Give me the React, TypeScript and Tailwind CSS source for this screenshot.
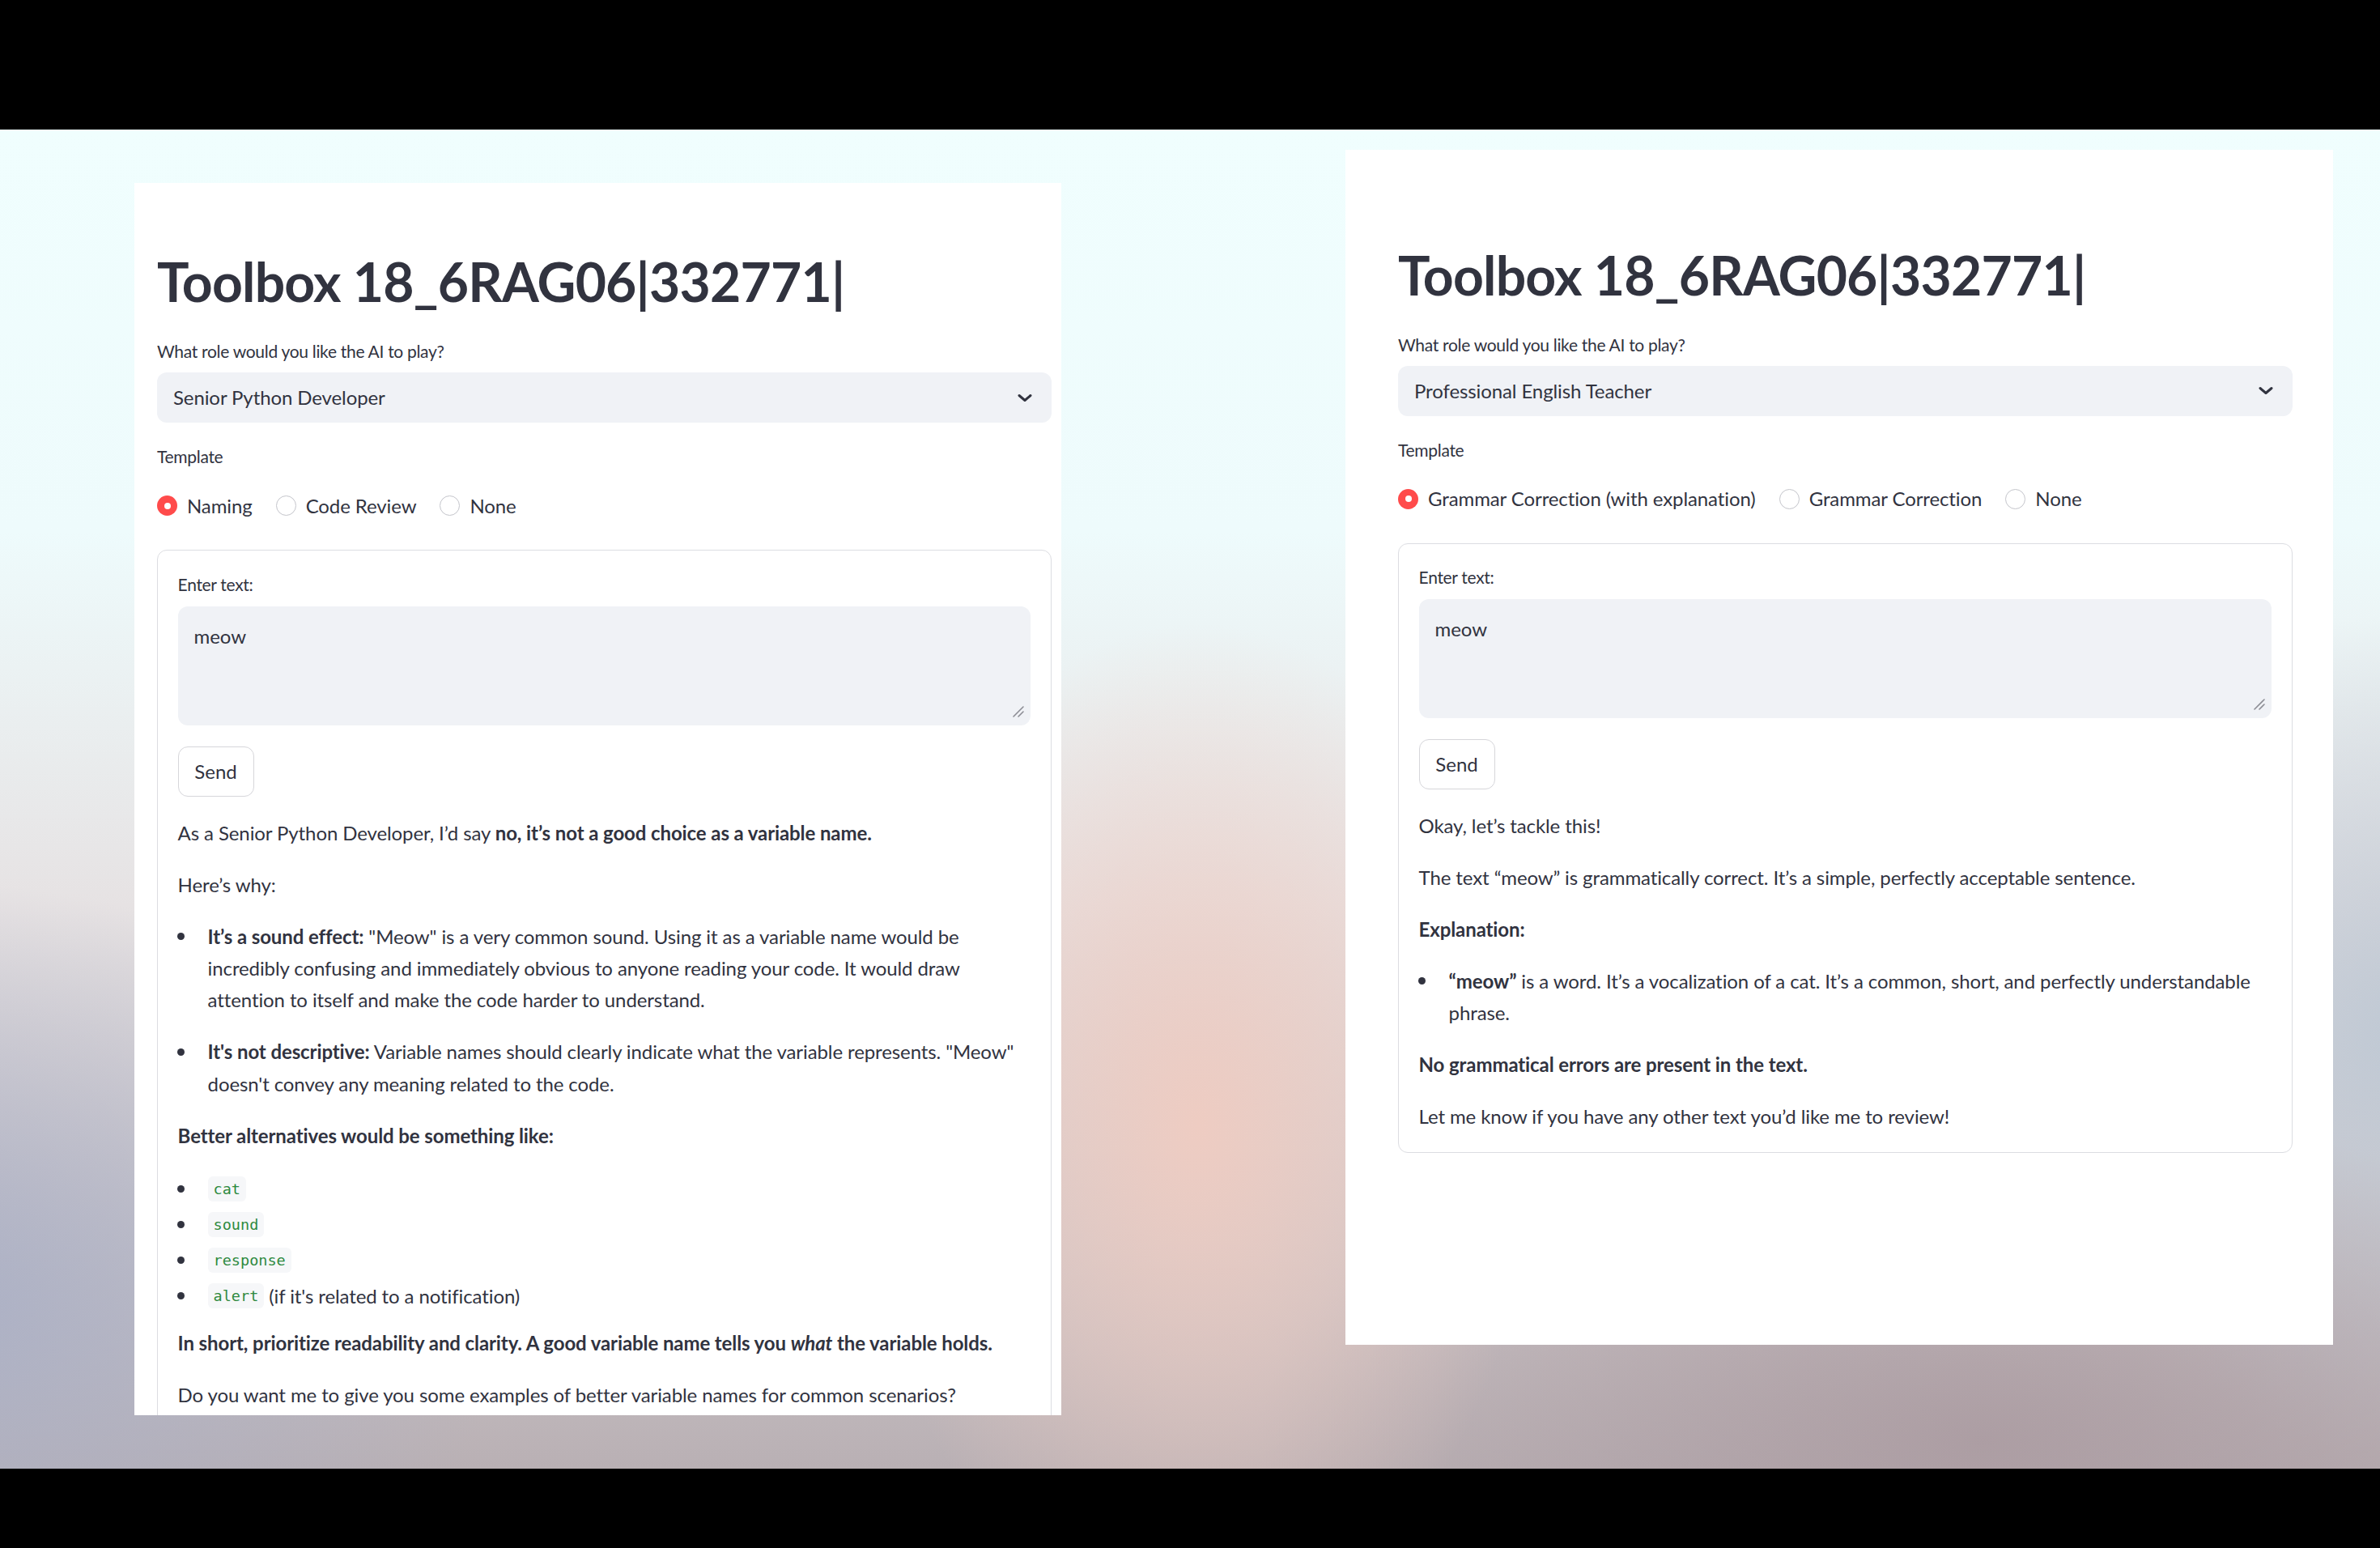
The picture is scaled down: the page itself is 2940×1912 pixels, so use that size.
import React from "react";

const body = "text-[24px] leading-[39.4px] tracking-[-0.1px]";

function Chevron() {
  return (
    <svg width="18" height="11" viewBox="0 0 18 11" fill="none">
      <path d="M2 2.5l7 6 7-6" stroke="#31333f" strokeWidth="3" strokeLinecap="round" strokeLinejoin="round" />
    </svg>
  );
}

function ResizeHandle() {
  return (
    <svg className="absolute right-[7px] bottom-[9px]" width="16" height="16" viewBox="0 0 16 16" fill="none">
      <path d="M2 14L14 2M8 14L14 8" stroke="#8d8e95" strokeWidth="1.6" strokeLinecap="round" />
    </svg>
  );
}

function Radio({ label, checked }: { label: string; checked?: boolean }) {
  return (
    <div className="flex items-center gap-[12px]">
      {checked ? (
        <span className="w-[25px] h-[25px] rounded-full bg-[#ff4b4b] flex items-center justify-center">
          <span className="w-[8px] h-[8px] rounded-full bg-white" />
        </span>
      ) : (
        <span className="w-[25px] h-[25px] rounded-full border-[1.5px] border-[#c4c5cb] bg-white" />
      )}
      <span className="text-[24px] leading-[34px] tracking-[-0.1px]">{label}</span>
    </div>
  );
}

function P({ children, last }: { children: React.ReactNode; last?: boolean }) {
  return <p className={last ? body : body + " mb-[24.6px]"}>{children}</p>;
}

function Dot() {
  return (
    <div className="w-[37px] h-[39.4px] shrink-0 flex items-center">
      <span className="w-[9px] h-[9px] rounded-full bg-[#31333f] ml-[-1px]" />
    </div>
  );
}

function Li({ children }: { children: React.ReactNode }) {
  return (
    <li className="flex mb-[24.6px]">
      <Dot />
      <div className={body + " flex-1"}>{children}</div>
    </li>
  );
}

function CodeLi({ code, rest }: { code: string; rest?: string }) {
  return (
    <li className="flex items-center h-[44px]">
      <Dot />
      <span className="h-[31px] px-[7px] rounded-[6px] bg-[#f6f7f9] text-[#2f8a3f] font-['DejaVu_Sans_Mono',monospace] text-[18.5px] leading-[31px]">
        {code}
      </span>
      {rest && <span className={body + " ml-[6px]"}>{rest}</span>}
    </li>
  );
}

function Form({
  role,
  options,
  children,
}: {
  role: string;
  options: string[];
  children: React.ReactNode;
}) {
  return (
    <div className="w-[1105px]">
      <h1 className="text-[66px] leading-[80px] font-bold tracking-[-0.8px]">Toolbox 18_6RAG06|332771|</h1>
      <div className="mt-[29px] text-[21px] leading-[34px] tracking-[-0.3px]">What role would you like the AI to play?</div>
      <div className="mt-[9px] h-[62px] rounded-[12px] bg-[#f0f2f6] flex items-center justify-between pl-[20px] pr-[24px]">
        <span className="text-[24px] tracking-[-0.1px]">{role}</span>
        <Chevron />
      </div>
      <div className="mt-[25px] text-[21px] leading-[34px] tracking-[-0.3px]">Template</div>
      <div className="mt-[26.5px] flex items-center gap-[29px]">
        {options.map((o, i) => (
          <Radio key={o} label={o} checked={i === 0} />
        ))}
      </div>
      <div className="mt-[37.5px] border border-[#dcdde2] rounded-[12px] p-[24.6px]">
        <div className="text-[21px] leading-[34px] tracking-[-0.3px]">Enter text:</div>
        <div className={"relative mt-[10.4px] h-[147px] rounded-[12px] bg-[#f0f2f6] px-[20px] pt-[17px] " + body}>
          meow
          <ResizeHandle />
        </div>
        <button className="block mt-[26px] h-[62px] w-[94px] rounded-[12px] border border-[#d6d6da] bg-white text-[24px]">
          Send
        </button>
        <div className="mt-[24.6px]">{children}</div>
      </div>
    </div>
  );
}

export default function App() {
  return (
    <div className="w-[2940px] h-[1912px] bg-black flex flex-col font-['Lato',sans-serif] text-[#31333f]">
      <div className="h-[160px] shrink-0" />
      <div className="h-[1654px] shrink-0 flex items-start pl-[166px] gap-[351px] bg-[radial-gradient(ellipse_420px_620px_at_1480px_1230px,rgba(238,204,194,1),transparent),radial-gradient(ellipse_700px_520px_at_-80px_1450px,rgba(170,176,198,0.95),transparent),radial-gradient(ellipse_900px_420px_at_2450px_1620px,rgba(170,154,160,0.85),transparent),radial-gradient(ellipse_420px_520px_at_2960px_1120px,rgba(190,200,212,0.95),transparent),linear-gradient(to_bottom,#f0fefe_0%,#eefbfc_30%,#e6e2e3_58%,#b9b0b4_100%)]">
        <div className="mt-[66px] w-[1145px] h-[1522px] shrink-0 bg-white overflow-hidden pl-[28px] pt-[82px]">
          <Form role="Senior Python Developer" options={["Naming", "Code Review", "None"]}>
            <P>
              As a Senior Python Developer, I’d say <b>no, it’s not a good choice as a variable name.</b>
            </P>
            <P>Here’s why:</P>
            <ul>
              <Li>
                <b>It’s a sound effect:</b> "Meow" is a very common sound. Using it as a variable name would be
                <br />
                incredibly confusing and immediately obvious to anyone reading your code. It would draw
                <br />
                attention to itself and make the code harder to understand.
              </Li>
              <Li>
                <b>It's not descriptive:</b> Variable names should clearly indicate what the variable represents. "Meow"
                <br />
                doesn't convey any meaning related to the code.
              </Li>
            </ul>
            <P>
              <b>Better alternatives would be something like:</b>
            </P>
            <ul className="mb-[16px]">
              <CodeLi code="cat" />
              <CodeLi code="sound" />
              <CodeLi code="response" />
              <CodeLi code="alert" rest="(if it's related to a notification)" />
            </ul>
            <P>
              <b>
                In short, prioritize readability and clarity. A good variable name tells you <i>what</i> the variable
                holds.
              </b>
            </P>
            <P>Do you want me to give you some examples of better variable names for common scenarios?</P>
          </Form>
        </div>
        <div className="mt-[25px] w-[1220px] h-[1476px] shrink-0 bg-white pl-[65px] pt-[114.5px]">
          <Form
            role="Professional English Teacher"
            options={["Grammar Correction (with explanation)", "Grammar Correction", "None"]}
          >
            <P>Okay, let’s tackle this!</P>
            <P>The text “meow” is grammatically correct. It’s a simple, perfectly acceptable sentence.</P>
            <P>
              <b>Explanation:</b>
            </P>
            <ul>
              <Li>
                <b>“meow”</b> is a word. It’s a vocalization of a cat. It’s a common, short, and perfectly understandable
                <br />
                phrase.
              </Li>
            </ul>
            <P>
              <b>No grammatical errors are present in the text.</b>
            </P>
            <P last>Let me know if you have any other text you’d like me to review!</P>
          </Form>
        </div>
      </div>
      <div className="flex-1" />
    </div>
  );
}
